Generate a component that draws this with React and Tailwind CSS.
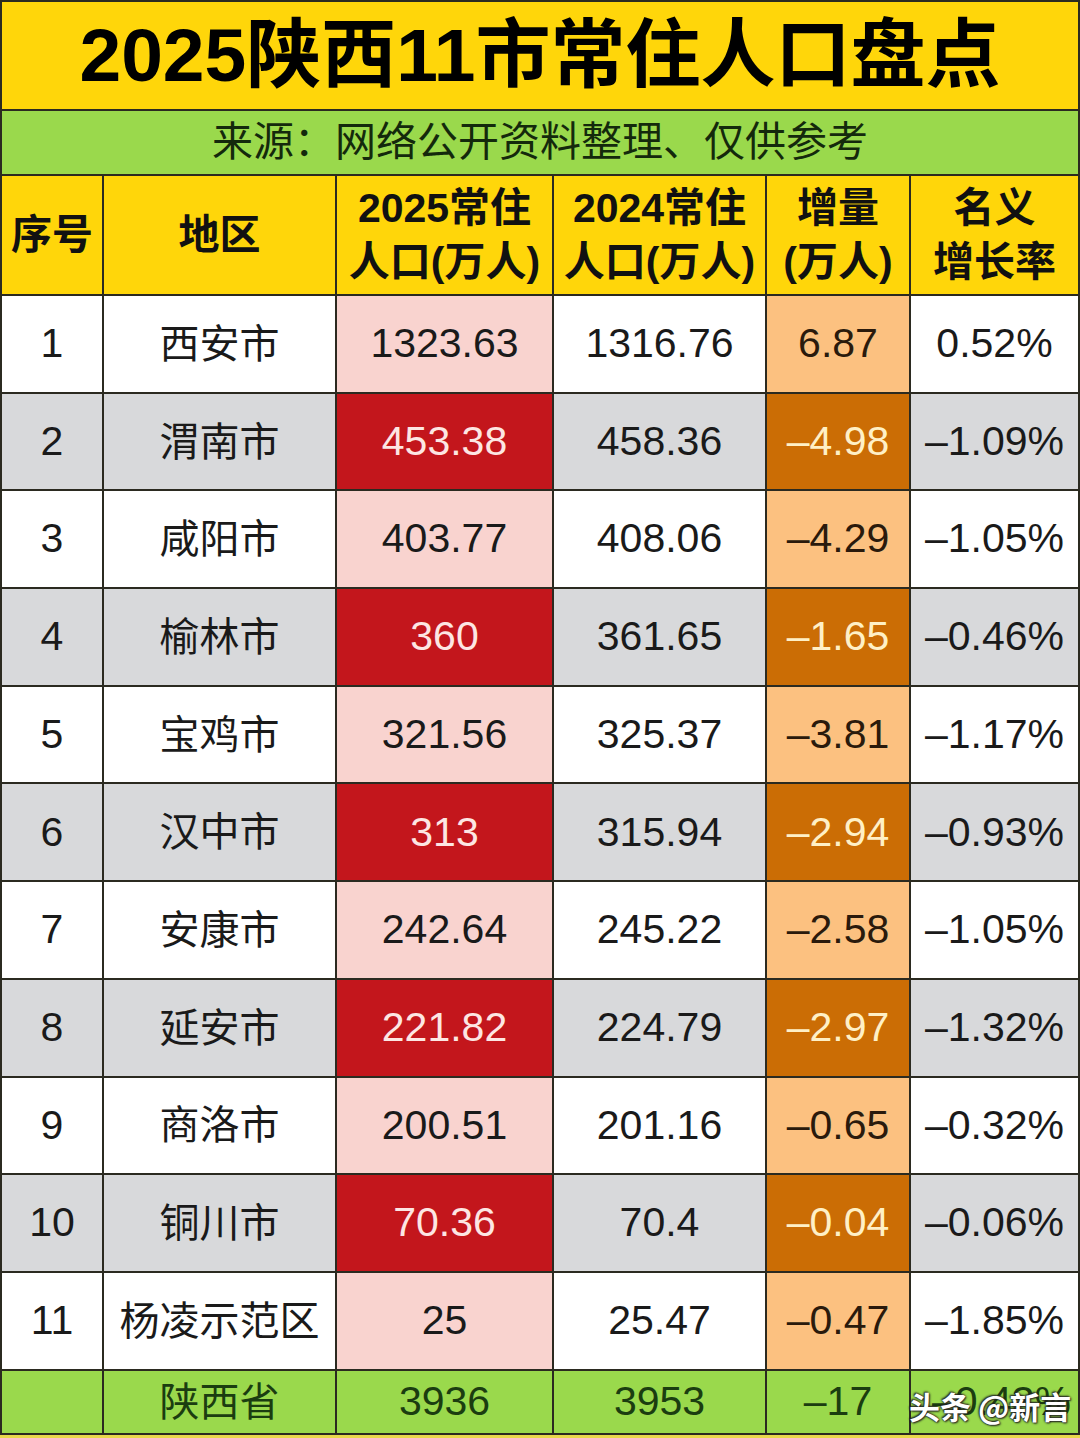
import React from "react";

const rows = [
  ["1", "西安市", "1323.63", "1316.76", "6.87", "0.52%"],
  ["2", "渭南市", "453.38", "458.36", "–4.98", "–1.09%"],
  ["3", "咸阳市", "403.77", "408.06", "–4.29", "–1.05%"],
  ["4", "榆林市", "360", "361.65", "–1.65", "–0.46%"],
  ["5", "宝鸡市", "321.56", "325.37", "–3.81", "–1.17%"],
  ["6", "汉中市", "313", "315.94", "–2.94", "–0.93%"],
  ["7", "安康市", "242.64", "245.22", "–2.58", "–1.05%"],
  ["8", "延安市", "221.82", "224.79", "–2.97", "–1.32%"],
  ["9", "商洛市", "200.51", "201.16", "–0.65", "–0.32%"],
  ["10", "铜川市", "70.36", "70.4", "–0.04", "–0.06%"],
  ["11", "杨凌示范区", "25", "25.47", "–0.47", "–1.85%"],
];

const headers = [
  ["序号"],
  ["地区"],
  ["2025常住", "人口(万人)"],
  ["2024常住", "人口(万人)"],
  ["增量", "(万人)"],
  ["名义", "增长率"],
];

const cell = "flex items-center justify-center text-center";

const Row = ({ data, index }) => {
  const even = index % 2 === 1;
  const plain = even ? "bg-[#d8d9db]" : "bg-white";
  return (
    <>
      <div className={`${cell} h-[95.7px] ${plain} text-[#1a1a1a]`}>{data[0]}</div>
      <div className={`${cell} h-[95.7px] ${plain} text-[#1a1a1a] text-[40px]`}>{data[1]}</div>
      <div className={`${cell} h-[95.7px] ${even ? "bg-[#c3161c] text-[#fde6e3]" : "bg-[#f9d3cf] text-[#1a1a1a]"}`}>{data[2]}</div>
      <div className={`${cell} h-[95.7px] ${plain} text-[#1a1a1a]`}>{data[3]}</div>
      <div className={`${cell} h-[95.7px] ${even ? "bg-[#cb6d05] text-[#fff0c6]" : "bg-[#fcc180] text-[#2a1a0c]"}`}>{data[4]}</div>
      <div className={`${cell} h-[95.7px] ${plain} text-[#1a1a1a]`}>{data[5]}</div>
    </>
  );
};

const App = () => {
  return (
    <div className="w-[1080px] h-[1438px] bg-[#2b2a20] font-['Liberation_Sans','Noto_Sans_CJK_SC',sans-serif] flex flex-col">
      <div className="grid grid-cols-[100px_231px_215px_211px_142px_1fr] gap-[2px] px-[2px] pt-[2px]">
        {/* title */}
        <div className={`${cell} col-span-6 h-[107px] bg-[#ffd60a] text-[75px] font-bold text-black`}>
          2025陕西11市常住人口盘点
        </div>
        <div className={`${cell} col-span-6 h-[63px] bg-[#9ad94c] text-[41px] text-[#14290c]`}>
          来源：网络公开资料整理、仅供参考
        </div>

        {/* header */}
        {headers.map((h, i) => (
          <div key={i} className={`${cell} flex-col h-[118px] bg-[#ffd60a] text-[41px] font-bold leading-[54px] text-[#111]`}>
            {h.map((line) => (
              <span key={line} className="whitespace-nowrap">{line}</span>
            ))}
          </div>
        ))}

        {/* data */}
        <div className="contents text-[41px]">
          {rows.map((r, i) => (
            <Row key={r[0]} data={r} index={i} />
          ))}
        </div>

        {/* total */}
        <div className="contents text-[41px] text-[#1b3d10]">
          <div className="h-[62px] bg-[#9ad94c]" />
          <div className={`${cell} h-[62px] bg-[#9ad94c] text-[40px]`}>陕西省</div>
          <div className={`${cell} h-[62px] bg-[#9ad94c]`}>3936</div>
          <div className={`${cell} h-[62px] bg-[#9ad94c]`}>3953</div>
          <div className={`${cell} h-[62px] bg-[#9ad94c]`}>–17</div>
          <div className={`${cell} h-[62px] bg-[#9ad94c] relative`}>
            <span className="pl-[14px]">–0.43%</span>
            <span className="absolute left-[-2px] top-[12px] text-[31px] font-bold text-white whitespace-nowrap font-['Noto_Sans_CJK_SC',sans-serif] [text-shadow:0_0_2px_#222,1px_1px_2px_#222,-1px_-1px_2px_#222]">
              头条 @新言
            </span>
          </div>
        </div>
      </div>
      <div className="mt-[2px] flex-1 bg-[#e9d84a]" />
    </div>
  );
};

export default App;
